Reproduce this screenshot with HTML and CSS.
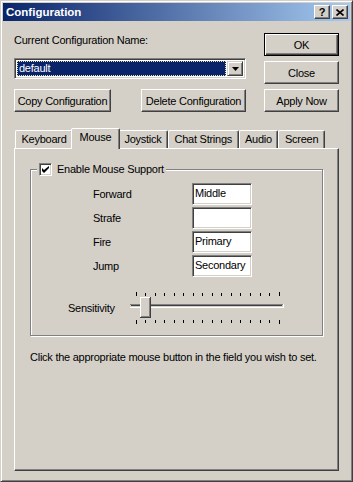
FILE: index.html
```html
<!DOCTYPE html>
<html lang="en">
<head>
  <meta charset="UTF-8" />
  <title>Configuration</title>
  <link rel="stylesheet" href="styles.css">
</head>
<body>
  <div class="window">
    <div class="titlebar">
      <span class="title">Configuration</span>
      <div class="cap-btns">
        <span class="cap-btn help">?</span>
        <span class="cap-btn">
          <svg width="8" height="7" viewBox="0 0 8 7"><path d="M0.5 0.5L7.5 6.5M7.5 0.5L0.5 6.5" stroke="#000" stroke-width="1.6"/></svg>
        </span>
      </div>
    </div>

    <div class="client">
      <div class="top">
        <div class="top-left">
          <div class="lbl">Current Configuration Name:</div>
          <div class="combo">
            <div class="combo-sel"><span>default</span></div>
            <div class="combo-drop">
              <svg width="7" height="4" viewBox="0 0 7 4"><path d="M0 0H7L3.5 4Z" fill="#000"/></svg>
            </div>
          </div>
          <div class="btn-row">
            <button class="btn copy">Copy Configuration</button>
            <button class="btn del">Delete Configuration</button>
          </div>
        </div>
        <div class="top-right">
          <button class="btn default">OK</button>
          <button class="btn">Close</button>
          <button class="btn">Apply Now</button>
        </div>
      </div>

      <div class="tabs">
        <div class="tab">Keyboard</div>
        <div class="tab active">Mouse</div>
        <div class="tab">Joystick</div>
        <div class="tab">Chat Strings</div>
        <div class="tab">Audio</div>
        <div class="tab">Screen</div>
      </div>

      <div class="panel">
        <fieldset class="group">
          <legend>
            <span class="check">
              <svg width="7" height="7" viewBox="0 0 7 7"><path d="M0 2L0 5L2 7L7 2L7 0L2 4Z" fill="#000"/></svg>
            </span>
            Enable Mouse Support
          </legend>

          <div class="binds">
            <span class="bind-lbl">Forward</span><div class="field">Middle</div>
            <span class="bind-lbl">Strafe</span><div class="field"></div>
            <span class="bind-lbl">Fire</span><div class="field">Primary</div>
            <span class="bind-lbl">Jump</span><div class="field">Secondary</div>
          </div>

          <div class="slider-row">
            <span class="slider-lbl">Sensitivity</span>
            <svg class="slider" width="154" height="32" viewBox="0 0 154 32">
              <g stroke="#000" stroke-width="1">
                <path d="M6.5 0V4M149.5 0V4M6.5 28V32M149.5 28V32"/>
                <path d="M15.5 1V4M25.5 1V4M34.5 1V4M44.5 1V4M53.5 1V4M63.5 1V4M72.5 1V4M82.5 1V4M91.5 1V4M101.5 1V4M110.5 1V4M120.5 1V4M130.5 1V4M139.5 1V4"/>
                <path d="M15.5 28V31M25.5 28V31M34.5 28V31M44.5 28V31M53.5 28V31M63.5 28V31M72.5 28V31M82.5 28V31M91.5 28V31M101.5 28V31M110.5 28V31M120.5 28V31M130.5 28V31M139.5 28V31"/>
              </g>
              <rect x="0" y="12" width="153" height="1" fill="#808080"/>
              <rect x="1" y="13" width="151" height="1" fill="#404040"/>
              <rect x="0" y="15" width="154" height="1" fill="#fff"/>
              <rect x="153" y="12" width="1" height="4" fill="#fff"/>
              <rect x="10" y="5" width="11" height="21" fill="#404040"/>
              <rect x="10" y="5" width="10" height="20" fill="#fff"/>
              <rect x="11" y="6" width="9" height="19" fill="#808080"/>
              <rect x="11" y="6" width="8" height="18" fill="#d4d0c8"/>
            </svg>
          </div>
        </fieldset>

        <p class="hint">Click the appropriate mouse button in the field you wish to set.</p>
      </div>
    </div>
  </div>
</body>
</html>
```

FILE: styles.css
```css
* { box-sizing: border-box; }

body {
  margin: 0;
  background: #d4d0c8;
  color: #000;
  font-family: "Liberation Sans", Arial, sans-serif;
  font-size: 11px;
  letter-spacing: -0.25px;
}

/* window frame */
.window {
  width: 353px; height: 482px;
  border: 1px solid;
  border-color: #d4d0c8 #404040 #404040 #d4d0c8;
  box-shadow: inset 1px 1px #fff, inset -1px -1px #808080;
  padding: 2px;
  display: flex; flex-direction: column;
}

.titlebar {
  height: 18px;
  background: linear-gradient(to right, #0a246a, #a6caf0);
  display: flex; align-items: center;
  padding: 0 2px 0 2px;
}
.title {
  flex: 1;
  color: #fff;
  font: bold 11.5px "Liberation Sans", Arial, sans-serif;
  letter-spacing: 0;
  padding-left: 1px;
}
.cap-btns { display: flex; gap: 2px; }
.cap-btn {
  width: 16px; height: 14px;
  background: #d4d0c8;
  border: 1px solid;
  border-color: #fff #404040 #404040 #fff;
  box-shadow: inset -1px -1px #808080;
  display: flex; align-items: center; justify-content: center;
}
.cap-btn.help {
  font: bold 11px "Liberation Sans", Arial, sans-serif;
  line-height: 12px;
}

.client {
  flex: 1;
  padding: 12px 11px 8px 11px;
  display: flex; flex-direction: column;
}

/* top section */
.top { display: flex; justify-content: space-between; }
.top-left { width: 232px; display: flex; flex-direction: column; }
.top-right { width: 75px; display: flex; flex-direction: column; gap: 5px; }

.lbl { margin-top: 1px; height: 13px; line-height: 13px; }

.btn {
  height: 23px;
  padding: 0;
  font: inherit;
  letter-spacing: inherit;
  color: #000;
  background: #d4d0c8;
  border: 1px solid;
  border-color: #fff #404040 #404040 #fff;
  box-shadow: inset -1px -1px #808080;
}
.btn.default {
  border-color: #000;
  box-shadow: inset 1px 1px #fff, inset -1px -1px #404040, inset -2px -2px #808080;
}
.btn-row { margin-top: 10px; display: flex; justify-content: space-between; }
.btn.copy { width: 97px; }
.btn.del { width: 105px; }

.combo {
  margin-top: 11px;
  height: 21px;
  background: #fff;
  border: 1px solid;
  border-color: #808080 #fff #fff #808080;
  box-shadow: inset 1px 1px #404040, inset -1px -1px #d4d0c8;
  padding: 2px;
  display: flex;
}
.combo-sel {
  flex: 1;
  margin: 0 1px 0 0;
  background: #0a246a;
  border: 1px dotted #e8e4b0;
  color: #fff;
  line-height: 13px;
  padding-left: 1px;
}
.combo-drop {
  width: 16px;
  background: #d4d0c8;
  border: 1px solid;
  border-color: #d4d0c8 #404040 #404040 #d4d0c8;
  box-shadow: inset 1px 1px #fff, inset -1px -1px #808080;
  display: flex; align-items: center; justify-content: center;
}

/* tabs */
.tabs {
  margin-top: 16px;
  height: 20px;
  display: flex; align-items: flex-end;
  padding-left: 1px;
}
.tab {
  height: 18px;
  padding: 0 5.5px;
  line-height: 16px;
  white-space: nowrap;
  border: 1px solid;
  border-bottom: none;
  border-color: #fff #404040 transparent #fff;
  border-radius: 2px 2px 0 0;
  box-shadow: inset -1px 0 #808080;
}
.tab.active {
  position: relative; z-index: 1;
  height: 21px;
  margin: 0 -2px -1px;
  padding: 0 7.5px;
  line-height: 17px;
  background: #d4d0c8;
}

.panel {
  flex: 1;
  border: 1px solid;
  border-color: #fff #404040 #404040 #fff;
  box-shadow: inset -1px -1px #808080;
  padding: 13px 15px 0 15px;
}

/* group box */
.group {
  margin: 0;
  padding: 0 0 11px 0;
  border: 1px solid #808080;
  box-shadow: 1px 1px #fff, inset 1px 1px #fff;
}
.group legend {
  margin-left: 6px;
  padding: 0 2px;
  height: 14px;
  line-height: 14px;
  background: #d4d0c8;
  display: flex; align-items: center; gap: 5px;
}
.check {
  width: 13px; height: 13px;
  background: #fff;
  border: 1px solid;
  border-color: #808080 #fff #fff #808080;
  box-shadow: inset 1px 1px #404040, inset -1px -1px #d4d0c8;
  display: flex; align-items: center; justify-content: center;
}

.binds {
  margin-top: 7px;
  padding-left: 62px;
  display: grid;
  grid-template-columns: 99px 60px;
  grid-auto-rows: 22px;
  row-gap: 2px;
  align-items: center;
}
.field {
  height: 22px;
  background: #fff;
  border: 1px solid;
  border-color: #808080 #fff #fff #808080;
  box-shadow: inset 1px 1px #404040, inset -1px -1px #d4d0c8;
  padding: 0 2px;
  line-height: 19px;
}

.slider-row {
  margin-top: 15px;
  padding-left: 37px;
  display: flex; align-items: center;
}
.slider-lbl { width: 62px; }
.slider { display: block; }

.hint { margin: 14px 0 0 0; line-height: 14px; }
```
